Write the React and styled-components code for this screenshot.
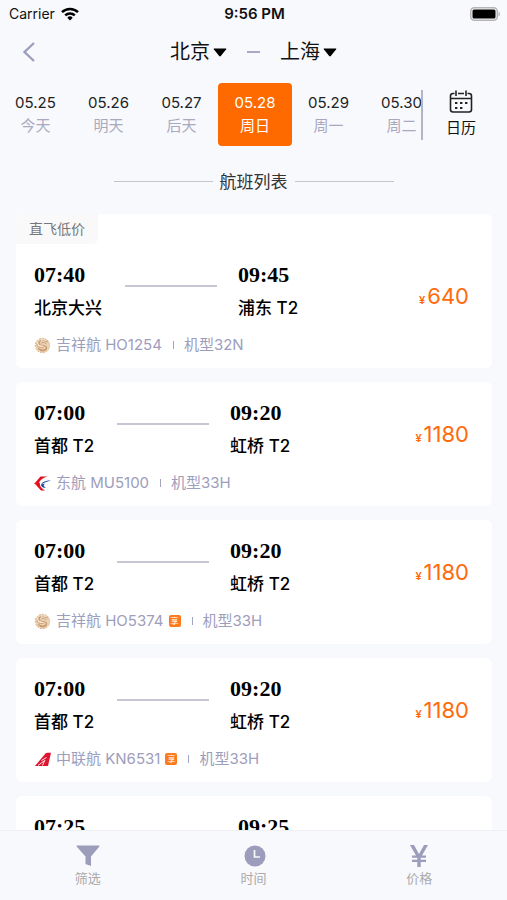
import React, { useState } from "react";
import styled, { createGlobalStyle } from "styled-components";

const GlobalStyle = createGlobalStyle`
  * { box-sizing: border-box; }
  body {
    margin: 0;
    background: #f8f9fd;
    color: #111;
    font-family: Inter, "Noto Sans CJK SC", sans-serif;
  }
  button {
    font: inherit;
    color: inherit;
    background: none;
    border: 0;
    padding: 0;
    cursor: pointer;
  }
  h1, p { margin: 0; font-weight: 400; }
  svg { display: block; flex: none; }
`;

const Screen = styled.div`
  height: 100vh;
  display: flex;
  flex-direction: column;
  overflow: hidden;
`;

const StatusBar = styled.div`
  flex: none;
  display: grid;
  grid-template-columns: 1fr auto 1fr;
  align-items: center;
  height: 28px;
  padding: 0 7px 0 9px;
  font-size: 14px;
  line-height: 20px;
`;

const Carrier = styled.span`
  display: flex;
  align-items: center;
  gap: 6px;
`;

const Clock = styled.time`
  font-size: 15px;
  font-weight: 600;
`;

const Battery = styled.span`
  justify-self: end;
`;

const Header = styled.header`
  flex: none;
  display: grid;
  grid-template-columns: 1fr auto 1fr;
  align-items: center;
  height: 48px;
  padding: 0 22px;
`;

const BackButton = styled.button`
  justify-self: start;
`;

const Route = styled.div`
  display: flex;
  align-items: center;
  gap: 20px;
`;

const CityButton = styled.button`
  display: flex;
  align-items: center;
  gap: 3px;
  font-size: 20px;
  line-height: 30px;
`;

const RouteDash = styled.span`
  width: 13px;
  height: 2px;
  background: #a9a9c6;
`;

const DateBar = styled.nav`
  flex: none;
  display: flex;
  align-items: center;
  height: 77px;
`;

const DateStrip = styled.div`
  flex: 1;
  min-width: 0;
  display: flex;
  margin-left: -1px;
  overflow: hidden;
`;

const DateButton = styled.button`
  flex: none;
  width: ${(p) => (p.$active ? "74px" : "73px")};
  height: 63px;
  padding-bottom: 1px;
  border-radius: 4px;
  font-size: 15px;
  line-height: 23px;
  color: ${(p) => (p.$active ? "#fff" : "#222")};
  background: ${(p) => (p.$active ? "#ff6a00" : "transparent")};
`;

const DayName = styled.span`
  display: block;
  color: ${(p) => (p.$active ? "#fff" : "#a9a9bd")};
`;

const CalendarButton = styled.button`
  flex: none;
  display: flex;
  flex-direction: column;
  align-items: center;
  gap: 4px;
  width: 86px;
  height: 50px;
  padding-right: 8px;
  border-left: 2px solid #b4b4c8;
  font-size: 15px;
  line-height: 22px;
`;

const ListTitle = styled.div`
  flex: none;
  display: flex;
  align-items: center;
  justify-content: center;
  gap: 7px;
  height: 61px;
  padding-bottom: 4px;
`;

const TitleText = styled.h1`
  font-size: 17px;
  line-height: 24px;
  color: #333;
`;

const TitleRule = styled.span`
  width: 99px;
  height: 1px;
  background: #c4c5cb;
`;

const FlightList = styled.main`
  flex: 1;
  min-height: 0;
  display: flex;
  flex-direction: column;
  gap: 14px;
  padding: 0 15px 0 16px;
  overflow: hidden;
`;

const Card = styled.article`
  flex: none;
  border-radius: 6px;
  background: #fff;
  overflow: hidden;
`;

const Tag = styled.div`
  width: max-content;
  height: 30px;
  padding: 0 13px;
  border-radius: 6px 0 6px 0;
  font-size: 14px;
  line-height: 30px;
  color: #777;
  background: #f9f9fa;
`;

const CardBody = styled.div`
  display: flex;
  flex-direction: column;
  gap: 15px;
  height: 124px;
  padding: 17px 23px 0 18px;
`;

const Journey = styled.div`
  display: flex;
  align-items: center;
`;

const Stop = styled.div`
  flex: none;
`;

const Time = styled.time`
  display: block;
  font-family: "Liberation Serif", serif;
  font-size: 22px;
  font-weight: 700;
  line-height: 28px;
  color: #000;
`;

const Airport = styled.p`
  margin-top: 7px;
  font-size: 17px;
  font-weight: 500;
  line-height: 24px;
  color: #000;
`;

const JourneyLine = styled.span`
  width: 92px;
  height: 2px;
  margin: 0 21px 9px 23px;
  background: #c6c6d4;
`;

const Price = styled.div`
  margin-left: auto;
  padding-top: 15px;
  font-size: 22px;
  line-height: 28px;
  color: #ff6a0a;
`;

const Currency = styled.span`
  margin-right: 2px;
  font-size: 11px;
  font-weight: 600;
`;

const Meta = styled.div`
  display: flex;
  align-items: center;
  gap: 5px;
  font-size: 15px;
  line-height: 20px;
  color: #9d9dbc;
`;

const MetaDivider = styled.span`
  width: 1px;
  height: 8px;
  margin: 0 5px 0 6px;
  background: #a5a5c0;
`;

const PerkBadge = styled.span`
  width: 12px;
  height: 12px;
  border-radius: 2px;
  font-size: 8px;
  line-height: 12px;
  text-align: center;
  color: #fff;
  background: #ff7a1c;
`;

const TabBar = styled.footer`
  flex: none;
  display: flex;
  height: 70px;
  padding: 0 5px;
  border-top: 1px solid #eeeff3;
`;

const TabButton = styled.button`
  flex: 1;
  display: flex;
  flex-direction: column;
  align-items: center;
  padding-top: 13px;
  font-size: 13px;
  line-height: 20px;
  color: #aaa;
`;

const WifiIcon = () => (
  <svg width="18" height="14" viewBox="0 0 18 14" fill="none" stroke="#000" strokeWidth="2.5">
    <path d="M1 5.2a11.4 11.4 0 0 1 16 0" />
    <path d="M4.2 8.4a6.8 6.8 0 0 1 9.6 0" />
    <path d="M9 13.4 6.3 10.7a3.8 3.8 0 0 1 5.4 0z" fill="#000" stroke="none" />
  </svg>
);

const BatteryIcon = () => (
  <svg width="30" height="14" viewBox="0 0 30 14">
    <rect x="0.75" y="0.75" width="26.5" height="12.5" rx="3.5" fill="none" stroke="#b5b5b5" strokeWidth="1.5" />
    <rect x="2.5" y="2.5" width="23" height="9" rx="1.5" fill="#000" />
    <path d="M28.5 4.5q1.5 1 1.5 2.5t-1.5 2.5z" fill="#b5b5b5" />
  </svg>
);

const BackIcon = () => (
  <svg width="13" height="20" viewBox="0 0 13 20" fill="none" stroke="#9d9dbd" strokeWidth="2.4">
    <path d="M12 1 2.5 10 12 19" />
  </svg>
);

const CaretIcon = () => (
  <svg width="14" height="9" viewBox="0 0 14 9">
    <path d="M1.2.5h11.6q1 0 .4.8L7.8 8q-.8.9-1.6 0L.8 1.3Q.2.5 1.2.5z" fill="#000" />
  </svg>
);

const CalendarIcon = () => (
  <svg width="24" height="23" viewBox="0 0 24 23" fill="none" stroke="#222" strokeWidth="1.6">
    <path d="M5.5 3.5H4A2.5 2.5 0 0 0 1.500 6v13.500A2.500 2.500 0 0 0 4 22h16a2.500 2.500 0 0 0 2.500-2.500V6A2.500 2.500 0 0 0 20 3.500h-1.500M9 3.500h6M1.500 8.500h21M7 .5V6M17 .5V6" />
    <path d="M6 13h2.400M11 13h2.400M16 13h2.400M6 18h2.400M11 18h2.400" strokeWidth="2.200" />
  </svg>
);

const JuneyaoLogo = () => (
  <svg width="17" height="17" viewBox="0 0 17 17" fill="none">
    <circle cx="8.500" cy="8.500" r="7" fill="#ecd3b5" />
    <circle cx="8.500" cy="8.500" r="7.200" stroke="#d8b083" strokeDasharray="2 1" />
    <path d="M13.500 5C10 2 4.500 3.500 5 6.500s7.500 1 7.500 4-5.500 3.500-8.500 1" stroke="#c4956a" strokeWidth="1.200" />
    <path d="M12.500 7C9.500 4.500 7 5.500 7.500 6.800M3 6.500C2.500 9.500 5 11 9.500 10.500M6 13.500c2 1 5 .5 6.500-1" stroke="#c4956a" strokeWidth=".8" />
    <path d="M3.500 5.500C3.500 8.500 6 9 9 9.300M7 3.500c2-.8 4-.5 5.500.5" stroke="#fff8ee" strokeWidth=".8" />
  </svg>
);

const EasternLogo = () => (
  <svg width="17" height="17" viewBox="0 0 17 17">
    <path d="M13.500 1.500H6.500L0 9l5.500 1C4 7 7 3.500 13.500 1.500z" fill="#e60f20" />
    <path d="M1.500 9.500 7 15.500h4C7 13 5.500 11 6 8z" fill="#e60f20" />
    <path d="M17 5.500C11 5.500 8 7 7 10c2-2.500 5-3 10-4.500z" fill="#174a9c" />
    <path d="M7 9.500C7 12 9 13 12 12.500 9.500 11.500 9 10.500 11 8.500z" fill="#174a9c" />
  </svg>
);

const UnitedLogo = () => (
  <svg width="17" height="17" viewBox="0 0 17 17">
    <path d="M1 15 11.500 2.500q.8-.8 2-.8H17L14 15z" fill="#df1530" />
    <path d="m4 14.500 6-4.500M8.500 14.500l2.500-5.500M7.500 9.500l5-3" stroke="#fff" strokeWidth=".9" fill="none" />
  </svg>
);

const FunnelIcon = () => (
  <svg width="24" height="24" viewBox="0 0 24 24" fill="#9c9dba">
    <path d="M1 1.500h22q1 0 .4 1L15 12.500V22l-5.500-2v-7.500L.6 2.500Q0 1.500 1 1.500z" />
  </svg>
);

const ClockIcon = () => (
  <svg width="24" height="24" viewBox="0 0 24 24">
    <circle cx="13" cy="12" r="10.500" fill="#9c9dba" />
    <path d="M12.500 6v7h5.500" fill="none" stroke="#f8f9fd" strokeWidth="1.700" />
  </svg>
);

const YuanIcon = () => (
  <svg width="24" height="24" viewBox="0 0 24 24" fill="#9c9dba">
    <path d="M3 1h4l5 9 5-9h4l-6 10.500h4v2.300h-5.300v2h5.300v2.300h-5.300V23h-3.400v-4.900H5v-2.300h5.300v-2H5v-2.300h4z" />
  </svg>
);

const dates = [
  ["05.25", "今天"],
  ["05.26", "明天"],
  ["05.27", "后天"],
  ["05.28", "周日"],
  ["05.29", "周一"],
  ["05.30", "周二"],
];

const flights = [
  { tag: "直飞低价", dep: "07:40", from: "北京大兴", arr: "09:45", to: "浦东 T2", price: 640, Logo: JuneyaoLogo, code: "吉祥航 HO1254", plane: "机型32N" },
  { dep: "07:00", from: "首都 T2", arr: "09:20", to: "虹桥 T2", price: 1180, Logo: EasternLogo, code: "东航 MU5100", plane: "机型33H" },
  { dep: "07:00", from: "首都 T2", arr: "09:20", to: "虹桥 T2", price: 1180, Logo: JuneyaoLogo, code: "吉祥航 HO5374", perk: true, plane: "机型33H" },
  { dep: "07:00", from: "首都 T2", arr: "09:20", to: "虹桥 T2", price: 1180, Logo: UnitedLogo, code: "中联航 KN6531", perk: true, plane: "机型33H" },
  { dep: "07:25", from: "北京大兴", arr: "09:25" },
];

const tabs = [
  ["筛选", FunnelIcon],
  ["时间", ClockIcon],
  ["价格", YuanIcon],
];

function FlightCard({ flight }) {
  const { Logo } = flight;
  return (
    <Card>
      {flight.tag && <Tag>{flight.tag}</Tag>}
      <CardBody>
        <Journey>
          <Stop>
            <Time>{flight.dep}</Time>
            <Airport>{flight.from}</Airport>
          </Stop>
          <JourneyLine />
          <Stop>
            <Time>{flight.arr}</Time>
            <Airport>{flight.to || "\u00a0"}</Airport>
          </Stop>
          {flight.price && (
            <Price>
              <Currency>¥</Currency>
              {flight.price}
            </Price>
          )}
        </Journey>
        {Logo && (
          <Meta>
            <Logo />
            <span>{flight.code}</span>
            {flight.perk && <PerkBadge>享</PerkBadge>}
            <MetaDivider />
            <span>{flight.plane}</span>
          </Meta>
        )}
      </CardBody>
    </Card>
  );
}

export default function App() {
  const [selected, setSelected] = useState("05.28");
  return (
    <Screen>
      <GlobalStyle />
      <StatusBar>
        <Carrier>
          Carrier
          <WifiIcon />
        </Carrier>
        <Clock>9:56 PM</Clock>
        <Battery>
          <BatteryIcon />
        </Battery>
      </StatusBar>
      <Header>
        <BackButton type="button" aria-label="返回">
          <BackIcon />
        </BackButton>
        <Route>
          <CityButton type="button">
            北京
            <CaretIcon />
          </CityButton>
          <RouteDash />
          <CityButton type="button">
            上海
            <CaretIcon />
          </CityButton>
        </Route>
      </Header>
      <DateBar>
        <DateStrip>
          {dates.map(([date, day]) => (
            <DateButton
              key={date}
              type="button"
              aria-pressed={date === selected}
              $active={date === selected}
              onClick={() => setSelected(date)}
            >
              {date}
              <DayName $active={date === selected}>{day}</DayName>
            </DateButton>
          ))}
        </DateStrip>
        <CalendarButton type="button">
          <CalendarIcon />
          日历
        </CalendarButton>
      </DateBar>
      <ListTitle>
        <TitleRule />
        <TitleText>航班列表</TitleText>
        <TitleRule />
      </ListTitle>
      <FlightList>
        {flights.map((flight, i) => (
          <FlightCard key={i} flight={flight} />
        ))}
      </FlightList>
      <TabBar>
        {tabs.map(([label, Icon]) => (
          <TabButton key={label} type="button">
            <Icon />
            {label}
          </TabButton>
        ))}
      </TabBar>
    </Screen>
  );
}
